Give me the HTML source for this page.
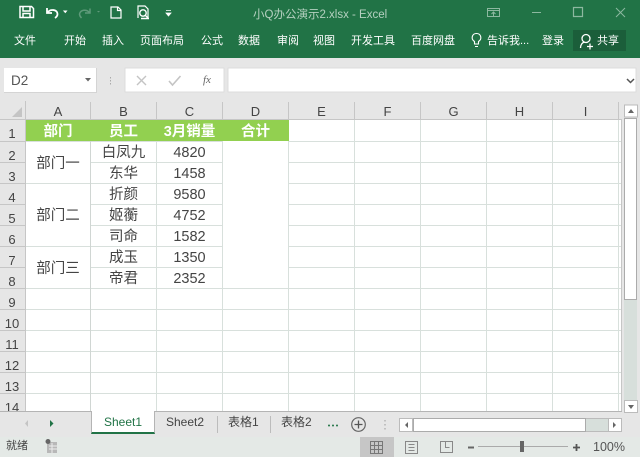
<!DOCTYPE html>
<html><head><meta charset="utf-8">
<style>
html,body{margin:0;padding:0;width:640px;height:457px;overflow:hidden;background:#e6e6e6}
#w{position:absolute;left:0;top:0;width:640px;height:457px;overflow:hidden;filter:blur(.3px);font-family:"Liberation Sans","Noto Sans CJK SC",sans-serif}
.a{position:absolute;white-space:nowrap}
.r{position:absolute;color:#fff;font-size:11px;top:33px;height:16px;line-height:16px;white-space:nowrap}
.ch{position:absolute;top:101px;height:18px;line-height:21px;text-align:center;font-size:13px;color:#444}
.rh{position:absolute;left:0;width:24px;height:21px;line-height:28px;text-align:center;font-size:13px;color:#444;overflow:hidden}
.c{position:absolute;text-align:center;font-size:14.5px;color:#444;height:21px;line-height:24px;white-space:nowrap}
.h{font-weight:bold;color:#fff;font-size:14.5px}
</style></head><body><div id="w">
<!-- ribbon -->
<div class="a" style="left:0;top:0;width:640px;height:58px;background:#217346"></div>
<div class="a" style="left:253px;top:8px;font-size:11.5px;line-height:15px;color:#b5d0c0">小Q办公演示2.xlsx - Excel</div>
<svg class="a" style="left:0;top:0" width="640" height="58" fill="none">
<path d="M20 6.500h11.500l2 2v9h-13.500z M23 7v4h7V7 M23 17.500v-4h7v4" stroke="#fff" stroke-width="1.500"/>
<path d="M47 8v5h5 M47.500 12.500c3-4 10-3 10 1.500 0 2-1 3-2.500 4" stroke="#fff" stroke-width="1.800"/>
<path d="M64 11l2.500 0-1.200 1.500z" fill="#fff" stroke="#fff"/>
<path d="M90 8.500v4.500h-5 M89.500 12.500c-3-3.500-9-3-10 1.500 0 2 1 3 2 4" stroke="#5f9a7a" stroke-width="1.500"/>
<path d="M97 11h3l-1.500 1.500z" fill="#5f9a7a"/>
<path d="M111 7h7l3 3v8h-10z M117.500 7v3.500h3.500" stroke="#fff" stroke-width="1.200"/>
<path d="M138 18V6h7l3 3v9" stroke="#fff" stroke-width="1.200"/>
<circle cx="143" cy="13" r="3.200" stroke="#fff" stroke-width="1.400"/>
<path d="M145.500 15.500l3 3M141 18.500h8" stroke="#fff" stroke-width="1.400"/>
<path d="M166 10.500h5M166 13h5l-2.500 3z" stroke="#fff" fill="#fff" stroke-width=".8"/>
<path d="M487.500 8.500h12v8h-12z M487.500 10.500h12 M493.500 16v-4m-2 2l2-2 2 2" stroke="#8db8a0" stroke-width="1"/>
<path d="M532 12.500h9" stroke="#8db8a0" stroke-width="1"/>
<path d="M573.500 7.500h9v9h-9z" stroke="#8db8a0" stroke-width="1.200"/>
<path d="M616 8l9 9M625 8l-9 9" stroke="#8db8a0" stroke-width="1"/>
<path d="M474.500 44v-2.500c-4-2.500-2.500-8 2-8s6 5.500 2 8V44z M475 46.500h3" stroke="#fff" stroke-width="1.100"/>
<rect x="573" y="30" width="53" height="21" fill="#1b5e3a"/>
<circle cx="586" cy="38.500" r="4" stroke="#fff" stroke-width="1.300"/>
<path d="M580.500 48c0-3.500 2-5.500 4-6M587 46.500h6M590 43.500v6" stroke="#fff" stroke-width="1.300"/>
</svg>
<span class="r" style="left:14px">文件</span>
<span class="r" style="left:64px">开始</span>
<span class="r" style="left:102px">插入</span>
<span class="r" style="left:140px">页面布局</span>
<span class="r" style="left:201px">公式</span>
<span class="r" style="left:238px">数据</span>
<span class="r" style="left:277px">审阅</span>
<span class="r" style="left:313px">视图</span>
<span class="r" style="left:351px">开发工具</span>
<span class="r" style="left:411px">百度网盘</span>
<span class="r" style="left:487px">告诉我...</span>
<span class="r" style="left:542px">登录</span>
<span class="r" style="left:597px">共享</span>

<!-- formula bar -->
<div class="a" style="left:4px;top:68px;width:92px;height:24px;background:#fff;border-right:1px solid #d4d4d4;border-bottom:1px solid #d4d4d4"></div>
<div class="a" style="left:11px;top:73px;font-size:13.500px;line-height:16px;color:#555">D2</div>
<svg class="a" style="left:0;top:60px" width="640" height="40" fill="none">
<path d="M85 18h6l-3 3.500z" fill="#666"/>
<path d="M110.500 17v1.500M110.500 20v1.500M110.500 23v1.500" stroke="#aaa"/>
<rect x="125" y="8" width="99" height="24" fill="#fff" stroke="#dcdcdc" />
<rect x="228" y="8" width="408" height="24" fill="#fff" stroke="#dcdcdc" />
<path d="M137 16l9 9M146 16l-9 9" stroke="#c4c4c4" stroke-width="1.400"/>
<path d="M169 21l3.500 4 8-9" stroke="#c4c4c4" stroke-width="1.600"/>
<path d="M627 19l3.500 3.500 3.500-3.500" stroke="#555" stroke-width="1.500"/>
</svg>
<div class="a" style="left:203px;top:72px;font:italic 11px/16px 'Liberation Serif',serif;color:#666">fx</div>

<!-- grid -->
<div class="a" style="left:0;top:100px;width:622px;height:18px;background:#e6e6e6"></div>
<div class="a" style="left:0;top:118px;width:25px;height:293px;background:#e6e6e6"></div>
<div class="a" style="left:26px;top:120px;width:595px;height:291px;background:#fff"></div>
<svg class="a" style="left:0;top:100px" width="640" height="312" fill="none" shape-rendering="crispEdges">
<path d="M22 7v10h-10z" fill="#c4c4c4" shape-rendering="auto"/>
<g stroke="#d8e0dc">
<path d="M156.500 20v291M222.500 20v291M288.500 20v291M354.500 20v291M420.500 20v291M486.500 20v291M552.500 20v291M618.500 20v291"/>
<path d="M26 41.500h595M26 62.500h595M26 83.500h595M26 104.500h595M26 125.500h595M26 146.500h595M26 167.500h595M26 188.500h595M26 209.500h595M26 230.500h595M26 251.500h595M26 272.500h595M26 293.500h595"/>
</g>
<rect x="26" y="42" width="64" height="41" fill="#fff"/>
<rect x="26" y="84" width="64" height="62" fill="#fff"/>
<rect x="26" y="147" width="64" height="41" fill="#fff"/>
<rect x="223" y="41" width="65" height="147" fill="#fff"/>
<path d="M90.500 20v291" stroke="#d0d6d3" stroke-width="1"/>
<g stroke="#c6c6c6">
<path d="M25.500 1v310M90.500 2v17M156.500 2v17M222.500 2v17M288.500 2v17M354.500 2v17M420.500 2v17M486.500 2v17M552.500 2v17M618.500 2v17"/>
<path d="M0 19.500h621M621.500 19v292"/>
<path d="M0 41.500h25M0 62.500h25M0 83.500h25M0 104.500h25M0 125.500h25M0 146.500h25M0 167.500h25M0 188.500h25M0 209.500h25M0 230.500h25M0 251.500h25M0 272.500h25M0 293.500h25"/>
</g>
</svg>
<div class="ch" style="left:26px;width:64px">A</div>
<div class="ch" style="left:91px;width:65px">B</div>
<div class="ch" style="left:157px;width:65px">C</div>
<div class="ch" style="left:223px;width:65px">D</div>
<div class="ch" style="left:289px;width:65px">E</div>
<div class="ch" style="left:355px;width:65px">F</div>
<div class="ch" style="left:421px;width:65px">G</div>
<div class="ch" style="left:487px;width:65px">H</div>
<div class="ch" style="left:553px;width:65px">I</div>
<div class="rh" style="top:120px">1</div><div class="rh" style="top:142px">2</div><div class="rh" style="top:163px">3</div><div class="rh" style="top:184px">4</div><div class="rh" style="top:205px">5</div><div class="rh" style="top:226px">6</div><div class="rh" style="top:247px">7</div><div class="rh" style="top:268px">8</div><div class="rh" style="top:289px">9</div><div class="rh" style="top:310px">10</div><div class="rh" style="top:331px">11</div><div class="rh" style="top:352px">12</div><div class="rh" style="top:373px">13</div>
<div class="rh" style="top:394px;height:17px">14</div>

<div class="a" style="left:26px;top:120px;width:263px;height:21px;background:#92d050"></div>
<div class="c h" style="left:26px;top:120px;width:64px">部门</div>
<div class="c h" style="left:91px;top:120px;width:65px">员工</div>
<div class="c h" style="left:157px;top:120px;width:65px">3月销量</div>
<div class="c h" style="left:223px;top:120px;width:65px">合计</div>
<div class="c" style="left:26px;top:152px;width:64px">部门一</div>
<div class="c" style="left:26px;top:204px;width:64px">部门二</div>
<div class="c" style="left:26px;top:257px;width:64px">部门三</div>
<div class="c" style="left:91px;top:141px;width:65px">白凤九</div><div class="c" style="left:157px;top:141px;width:65px">4820</div>
<div class="c" style="left:91px;top:162px;width:65px">东华</div><div class="c" style="left:157px;top:162px;width:65px">1458</div>
<div class="c" style="left:91px;top:183px;width:65px">折颜</div><div class="c" style="left:157px;top:183px;width:65px">9580</div>
<div class="c" style="left:91px;top:204px;width:65px">姬蘅</div><div class="c" style="left:157px;top:204px;width:65px">4752</div>
<div class="c" style="left:91px;top:225px;width:65px">司命</div><div class="c" style="left:157px;top:225px;width:65px">1582</div>
<div class="c" style="left:91px;top:246px;width:65px">成玉</div><div class="c" style="left:157px;top:246px;width:65px">1350</div>
<div class="c" style="left:91px;top:267px;width:65px">帝君</div><div class="c" style="left:157px;top:267px;width:65px">2352</div>

<!-- right scrollbar -->
<div class="a" style="left:622px;top:100px;width:18px;height:337px;background:#e6e6e6"></div>
<div class="a" style="left:624px;top:118px;width:13px;height:182px;background:#fff;border:1px solid #ababab;box-sizing:border-box"></div>
<div class="a" style="left:624px;top:300px;width:13px;height:100px;background:#d7dfdb"></div>
<svg class="a" style="left:622px;top:100px" width="18" height="315" fill="none"><rect x="2.500" y="5" width="13" height="12" fill="#fff" stroke="#bbb"/><path d="M6 13h6l-3-4z" fill="#666"/><rect x="2.500" y="300.500" width="13" height="12" fill="#fff" stroke="#bbb"/><path d="M6 305h6l-3 4z" fill="#666"/></svg>

<!-- tabs -->
<div class="a" style="left:0;top:411px;width:622px;height:26px;background:#e6e6e6;border-top:1px solid #b4b4b4;box-sizing:border-box"></div>
<div class="a" style="left:91px;top:411px;width:64px;height:23px;background:#fff;border:1px solid #b4b4b4;border-top:0;border-bottom:2px solid #217346;box-sizing:border-box"></div>
<div class="a" style="left:91px;top:414px;width:64px;text-align:center;font-size:12px;line-height:16px;color:#217346">Sheet1</div>
<div class="a" style="left:166px;top:414px;font-size:12px;line-height:16px;color:#444">Sheet2</div>
<div class="a" style="left:228px;top:414px;font-size:12px;line-height:16px;color:#444">表格1</div>
<div class="a" style="left:281px;top:414px;font-size:12px;line-height:16px;color:#444">表格2</div>
<svg class="a" style="left:0;top:405px" width="640" height="30" fill="none">
<path d="M28 22v-7l-3 3.500z" fill="#c4c4c4"/>
<path d="M50 15v7l3.500-3.500z" fill="#217346"/>
<path d="M217.500 11v17M270.500 11v17" stroke="#bcbcbc"/>
<circle cx="329" cy="20.500" r="1" fill="#217346"/><circle cx="333" cy="20.500" r="1" fill="#217346"/><circle cx="337" cy="20.500" r="1" fill="#217346"/>
<circle cx="358.500" cy="19.500" r="6.800" stroke="#666" stroke-width="1.200"/>
<path d="M354.500 19.500h8M358.500 15.500v8" stroke="#555" stroke-width="1.300"/>
<path d="M385 15v1.500M385 19v1.500M385 23v1.500" stroke="#999"/>
<rect x="399.500" y="13.500" width="222" height="13" fill="#d7dfdb" stroke="#bbb"/>
<rect x="399.500" y="13.500" width="13" height="13" fill="#fff" stroke="#bbb"/>
<rect x="413.500" y="13.500" width="172" height="13" fill="#fff" stroke="#ababab"/>
<rect x="608.500" y="13.500" width="13" height="13" fill="#fff" stroke="#bbb"/>
<path d="M408 17v6l-3-3z" fill="#666"/><path d="M613 17v6l3-3z" fill="#666"/>
</svg>

<!-- status -->
<div class="a" style="left:0;top:437px;width:640px;height:20px;background:#e4e9e6"></div>
<div class="a" style="left:6px;top:439px;font-size:11px;line-height:15px;color:#444">就绪</div>
<div class="a" style="left:360px;top:437px;width:34px;height:20px;background:#c6c6c6"></div>
<svg class="a" style="left:0;top:437px" width="640" height="20" fill="none">
<path d="M47 5h10v11H47z" fill="#b8b8b8"/><circle cx="48" cy="4.500" r="2.500" fill="#666"/><path d="M49 9h8M49 12h8M52 6v10" stroke="#eee"/>
<path d="M370.500 4.500h12v12h-12zM370.500 8.500h12M370.500 12.500h12M374.500 4.500v12M378.500 4.500v12" stroke="#777"/>
<path d="M405.500 4.500h12v12h-12zM408.500 7.500h6M408.500 10.500h6M408.500 13.500h6" stroke="#888"/>
<path d="M440.500 4.500h12v11h-12zM445.500 4.500v6h4" stroke="#888"/>
<path d="M468 10.500h6" stroke="#666" stroke-width="2"/>
<path d="M478 9.500h90" stroke="#aaa"/>
<rect x="520" y="4" width="4" height="11" fill="#666"/>
<path d="M573 10.500h7M576.500 7v7" stroke="#555" stroke-width="1.800"/>
</svg>
<div class="a" style="left:593px;top:440px;font-size:12.500px;line-height:15px;color:#555">100%</div>
</div></body></html>
